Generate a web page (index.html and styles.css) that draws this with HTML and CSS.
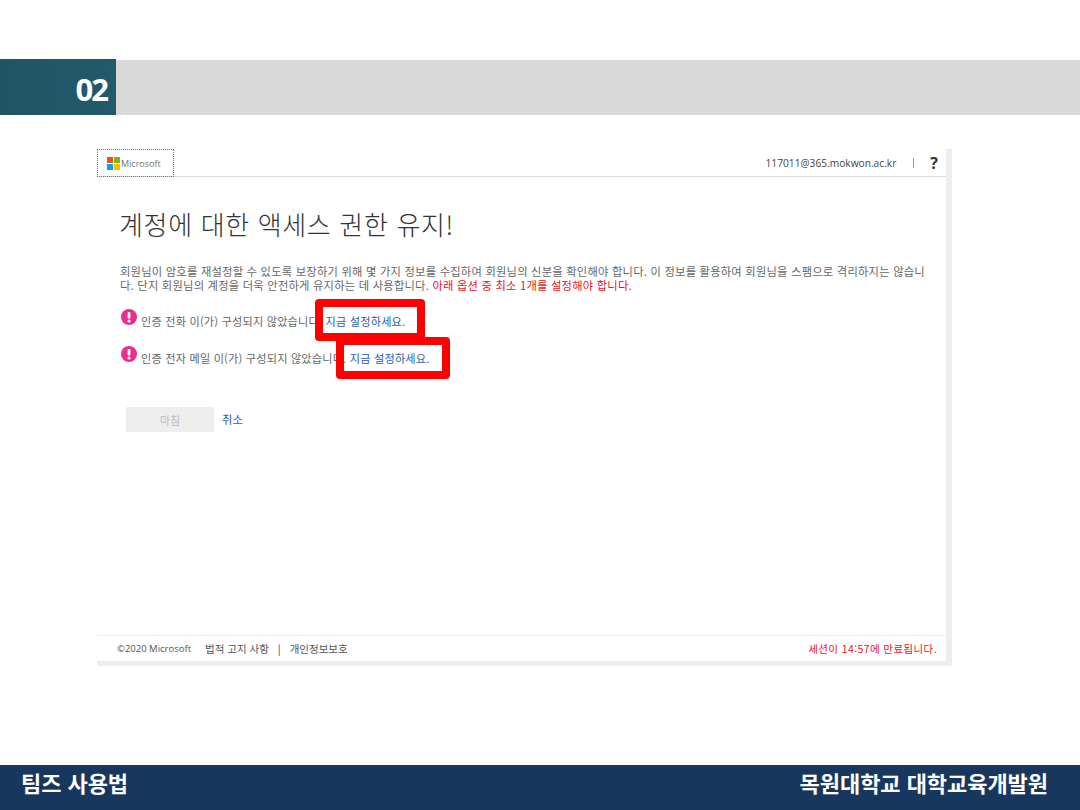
FILE: index.html
```html
<!DOCTYPE html>
<html lang="ko">
<head>
<meta charset="utf-8">
<title>팀즈 사용법</title>
<link rel="stylesheet" href="styles.css">
</head>
<body>
<div class="slide">
  <header class="band">
    <div class="num">02</div>
    <div class="band-fill"></div>
  </header>
  <main class="stage">
    <section class="shot">
      <div class="shot-inner">
        <div class="top">
          <div class="logo">
            <svg class="ms" width="13" height="13" viewBox="0 0 13 13"><rect width="6" height="6" fill="#f25022"/><rect x="7" width="6" height="6" fill="#7fba00"/><rect y="7" width="6" height="6" fill="#00a4ef"/><rect x="7" y="7" width="6" height="6" fill="#ffb900"/></svg>
            <span>Microsoft</span>
          </div>
          <div class="user">
            <span class="mail">117011@365.mokwon.ac.kr</span>
            <span class="sep"></span>
            <span class="help">?</span>
          </div>
        </div>
        <div class="content">
          <h1>계정에 대한 액세스 권한 유지!</h1>
          <p class="desc">회원님이 암호를 재설정할 수 있도록 보장하기 위해 몇 가지 정보를 수집하여 회원님의 신분을 확인해야 합니다. 이 정보를 활용하여 회원님을 스팸으로 격리하지는 않습니다. 단지 회원님의 계정을 더욱 안전하게 유지하는 데 사용합니다. <span class="warn">아래 옵션 중 최소 1개를 설정해야 합니다.</span></p>
          <div class="row row-a">
            <svg class="alert" width="16" height="16" viewBox="0 0 16 16"><circle cx="8" cy="8" r="8" fill="#e8308a"/><rect x="6.6" y="3" width="2.8" height="6.6" rx="1" fill="#fff"/><circle cx="8" cy="12" r="1.6" fill="#fff"/></svg>
            <span class="msg">인증 전화 이(가) 구성되지 않았습니다. <a class="link">지금 설정하세요.</a></span>
            <span class="mark mark-a"></span>
          </div>
          <div class="row row-b">
            <svg class="alert" width="16" height="16" viewBox="0 0 16 16"><circle cx="8" cy="8" r="8" fill="#e8308a"/><rect x="6.6" y="3" width="2.8" height="6.6" rx="1" fill="#fff"/><circle cx="8" cy="12" r="1.6" fill="#fff"/></svg>
            <span class="msg">인증 전자 메일 이(가) 구성되지 않았습니다. <a class="link">지금 설정하세요.</a></span>
            <span class="mark mark-b"></span>
          </div>
          <div class="actions">
            <button class="finish" type="button">마침</button>
            <a class="link cancel">취소</a>
          </div>
        </div>
        <div class="bottom">
          <div class="legal">
            <span class="copy">©2020 Microsoft</span>
            <span>법적 고지 사항</span>
            <span class="bar">|</span>
            <span>개인정보보호</span>
          </div>
          <div class="session">세션이 14:57에 만료됩니다.</div>
        </div>
      </div>
    </section>
  </main>
  <footer class="foot">
    <span>팀즈 사용법</span>
    <span>목원대학교 대학교육개발원</span>
  </footer>
</div>
</body>
</html>
```
FILE: styles.css
```css
* { box-sizing: border-box; }
html, body { margin: 0; padding: 0; background: #fff; }
body { font-family: "Noto Sans CJK KR", "Liberation Sans", sans-serif; }
.slide { width: 1080px; height: 810px; display: flex; flex-direction: column; overflow: hidden; }

.band { display: flex; height: 56px; margin-top: 59px; }
.num {
  width: 116px; height: 56px; background: linear-gradient(90deg, #1f5565, #235a6b);
  color: #fff; font: 700 31px/61px "Open Sans", sans-serif; letter-spacing: -2px;
  text-align: right; padding-right: 9px;
}
.band-fill { flex: 1; height: 55px; margin-top: 1px; background: #d9d9d9; }

.stage { flex: 1; padding: 34px 0 0 97px; }
.shot { width: 855px; height: 517px; background: #eee; padding: 0 6px 5px 0; }
.shot-inner { height: 512px; background: #fff; display: flex; flex-direction: column; }

.top { height: 28px; display: flex; justify-content: space-between; border-bottom: 1px solid #d8dadd; }
.logo {
  width: 77px; height: 28px; border: 1px dotted #777; display: flex; align-items: center;
  padding-left: 9px; gap: 1px; font: 9px "Open Sans", sans-serif; color: #737373;
}
.user { display: flex; align-items: center; color: #444; font: 10.2px "Open Sans", sans-serif; padding-right: 8px; }
.sep { width: 1px; height: 10px; background: #999; margin: 0 16px 0 17px; }
.help { font: 700 16px "Open Sans", sans-serif; color: #333; }

.content { flex: 1; padding: 0 0 0 23px; color: #666; font-size: 11.3px; letter-spacing: .2px; line-height: 14px; }
h1 { margin: 30px 0 0 -1px; font-weight: 300; font-size: 26px; line-height: 34px; color: #333; letter-spacing: .65px; }
.desc { width: 810px; margin: 24px 0 0; line-height: 13.5px; word-break: break-all; }
.warn { color: #e81123; }
.row { position: relative; display: flex; align-items: flex-start; gap: 4px; padding-left: 1px; }
.row-a { margin-top: 17px; }
.row-b { margin-top: 18px; }
.msg { margin-top: 5px; font-size: 11.15px; }
.alert { flex: none; }
.link { color: #2b5cb5; }
.cancel { margin-bottom: 2px; }
.mark { position: absolute; border: 8px solid #f00; border-radius: 4px; background: transparent; }
.mark-a { left: 195px; top: -10px; width: 110px; height: 42px; }
.mark-b { left: 216px; top: -9px; width: 114px; height: 42px; }

.actions { display: flex; align-items: center; gap: 8px; margin-top: 42px; margin-left: 6px; }
.finish {
  width: 88px; height: 25px; border: 0; background: #eee; color: #bbb;
  font: 11px "Noto Sans CJK KR", sans-serif;
}

.bottom {
  height: 26px; border-top: 1px solid #eee; display: flex; justify-content: space-between;
  align-items: center; padding: 0 9px 0 20px; font-size: 10.5px; color: #555;
}
.legal { display: flex; gap: 9px; }
.copy { font-family: "Open Sans", sans-serif; font-size: 9.5px; margin-right: 5px; line-height: 16px; }
.bar { color: #333; }
.session { color: #e81123; letter-spacing: .4px; }

.foot {
  height: 45px; background: #17375e; color: #fff; display: flex; justify-content: space-between;
  padding: 0 32px 0 21px; font-weight: 700; font-size: 22px; line-height: 34px; letter-spacing: -.05px;
}
```
